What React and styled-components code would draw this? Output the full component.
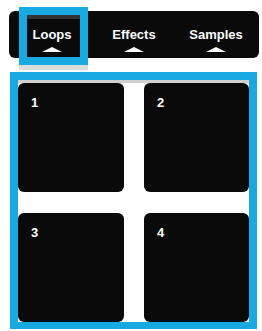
import React from "react";
import styled, { createGlobalStyle } from "styled-components";

const Global = createGlobalStyle`
  html, body {
    margin: 0;
    padding: 0;
    background: #ffffff;
    font-family: "Liberation Sans", Arial, sans-serif;
  }
`;

const BLUE = "#18a9e1";

const Page = styled.div`
  width: 262px;
  height: 331px;
  padding-top: 11px;
  box-sizing: border-box;
`;

const TabBar = styled.div`
  margin-left: 9px;
  width: 250px;
  height: 47px;
  padding: 0 2px;
  box-sizing: border-box;
  background: #0a0a0a;
  border-radius: 6px;
  display: flex;
`;

const Tab = styled.div`
  position: relative;
  flex: 1;
  display: flex;
  flex-direction: column;
  align-items: center;
  padding-top: 16px;
  color: #ffffff;
  font-size: 13px;
  font-weight: 700;
  line-height: 15px;

  ${(p) =>
    p.$active &&
    `
    &::after {
      content: "";
      position: absolute;
      left: 8px;
      top: -4px;
      width: 69px;
      height: 58px;
      box-sizing: border-box;
      border: 8px solid ${BLUE};
      box-shadow: inset 0 4px 0 #333333, 0 5px 0 #dcdcdc;
    }
  `}
`;

const Label = styled.span`
  position: relative;
  z-index: 1;
`;

const Caret = styled.span`
  margin-top: 5px;
  width: 0;
  height: 0;
  border-left: 10px solid transparent;
  border-right: 10px solid transparent;
  border-bottom: 5px solid #ffffff;
`;

const Panel = styled.div`
  margin: 14px 0 0 10px;
  width: 247px;
  height: 257px;
  box-sizing: border-box;
  border: 8px solid ${BLUE};
  border-bottom-width: 7px;
  background: #ffffff;
  overflow: hidden;
`;

const PadGrid = styled.div`
  height: 100%;
  box-sizing: border-box;
  border-top: 3px solid #d0d0d0;
  display: grid;
  grid-template-columns: 106px 1fr;
  grid-template-rows: 109px 109px;
  column-gap: 20px;
  row-gap: 21px;
`;

const Pad = styled.div`
  background: #0a0a0a;
  border-radius: 6px;
  padding: 12px 13px;
  color: #ffffff;
  font-size: 13px;
  font-weight: 700;
  line-height: 15px;
`;

const tabs = ["Loops", "Effects", "Samples"];

export default function App() {
  return (
    <Page>
      <Global />
      <TabBar>
        {tabs.map((t, i) => (
          <Tab key={t} $active={i === 0}>
            <Label>{t}</Label>
            <Caret />
          </Tab>
        ))}
      </TabBar>
      <Panel>
        <PadGrid>
          {[1, 2, 3, 4].map((n) => (
            <Pad key={n}>{n}</Pad>
          ))}
        </PadGrid>
      </Panel>
    </Page>
  );
}
